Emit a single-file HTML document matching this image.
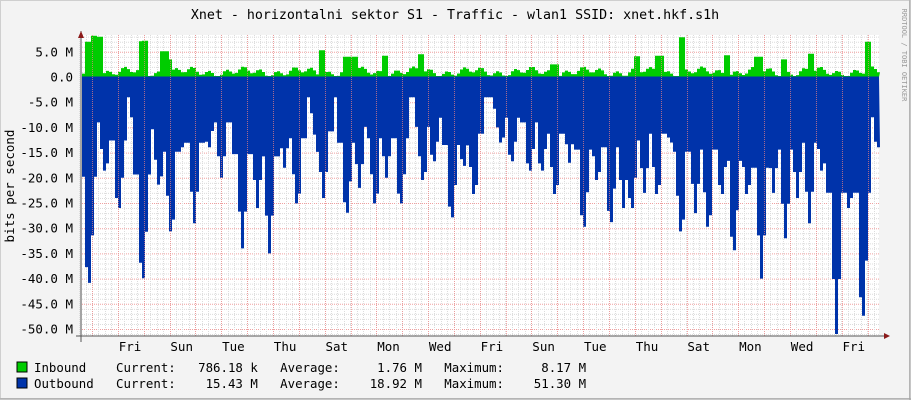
<!DOCTYPE html>
<html><head><meta charset="utf-8"><style>
html,body{margin:0;padding:0;background:#f3f3f3;}
svg{display:block;font-family:"DejaVu Sans Mono","Liberation Mono",monospace;}
</style></head><body>
<svg id="g" width="911" height="400" xmlns="http://www.w3.org/2000/svg">
<rect x="0" y="0" width="911" height="400" fill="#f3f3f3"/>
<rect x="0.5" y="0.5" width="909" height="398" fill="none" stroke="#cfcfcf"/>
<line x1="0" y1="399" x2="911" y2="399" stroke="#9a9a9a"/>
<line x1="910" y1="0" x2="910" y2="400" stroke="#9a9a9a"/>
<rect x="82" y="35" width="797" height="301" fill="#ffffff"/>
<g id="grid"></g>
<g id="data"></g>
<g id="grid2"></g>
<text x="455" y="19" font-size="13.3" text-anchor="middle" fill="#000">Xnet - horizontalni sektor S1 - Traffic - wlan1 SSID: xnet.hkf.s1h</text>
<text transform="translate(902,55) rotate(90)" font-size="7" fill="#999" text-anchor="middle">RRDTOOL / TOBI OETIKER</text>
<text transform="translate(14,186) rotate(-90)" font-size="12.5" fill="#000" text-anchor="middle">bits per second</text>
<g id="ylab" font-size="12.5" text-anchor="end" fill="#000"></g>
<g id="xlab" font-size="12.5" text-anchor="middle" fill="#000"></g>
<line x1="81" y1="31" x2="81" y2="342" stroke="#555"/>
<line x1="76" y1="336" x2="884" y2="336" stroke="#555"/>
<polygon points="78,38 84,38 81,31" fill="#8b1a1a"/>
<polygon points="884,333 884,339 890,336" fill="#8b1a1a"/>
<rect x="17" y="362" width="10" height="10" fill="#00cc00" stroke="#000"/>
<rect x="17" y="378" width="10" height="10" fill="#0033aa" stroke="#000"/>
<text x="34" y="372" font-size="12.4" xml:space="preserve">Inbound    Current:   786.18 k   Average:     1.76 M   Maximum:     8.17 M</text>
<text x="34" y="388" font-size="12.4" xml:space="preserve">Outbound   Current:    15.43 M   Average:    18.92 M   Maximum:    51.30 M</text>
</svg>
<script>
var ns="http://www.w3.org/2000/svg";
function el(p,t,a){var e=document.createElementNS(ns,t);for(var k in a)e.setAttribute(k,a[k]);p.appendChild(e);return e;}
var G=document.getElementById('grid'),G2=document.getElementById('grid2'),D=document.getElementById('data');
var X0=82,X1=879,Y0=77,S=5.04;
function y(v){return Y0-v*S;}
for(var v=-51;v<=8;v++){var yy=y(v)+0.5;if(yy<35||yy>336)continue;
 el(G,'line',{x1:X0,x2:X1,y1:yy,y2:yy,stroke:(v%5==0)?'#f0a0a0':'#dcdcdc','stroke-dasharray':'1,1'});}
for(var x=79.1;x<X1;x+=6.46){var xx=Math.round(x)+0.5;el(G,'line',{x1:xx,x2:xx,y1:35,y2:336,stroke:'#dcdcdc','stroke-dasharray':'1,1'});}
for(var x=92;x<X1;x+=25.85){var xx=Math.round(x)+0.5;el(G2,'line',{x1:xx,x2:xx,y1:35,y2:336,stroke:'#f08080','stroke-dasharray':'1,1','stroke-opacity':'0.7'});}
var peaks=[[87,-44],[104,-20],[117,-28],[141,-43],[158,-23],[170,-33],[182,-15],[193,-29],[207,-15],[220,-20],[241,-34],[256,-26],[268,-35],[283,-18],[296,-27],[317,-16],[322,-24],[345,-29],[358,-22],[374,-27],[385,-20],[399,-27],[422,-22],[432,-18],[450,-30],[462,-19],[473,-25],[500,-14],[510,-18],[528,-20],[540,-20],[554,-25],[568,-17],[582,-32],[596,-22],[609,-31],[622,-26],[630,-28],[643,-23],[656,-25],[669,-14],[680,-33],[694,-27],[707,-32],[720,-25],[732,-37],[746,-25],[760,-40],[772,-23],[784,-32],[796,-24],[808,-29],[821,-20],[835,-51],[848,-28],[861,-51],[872,-8],[876,-15]];
var d="M"+X0+","+Y0;
for(var x=X0;x<X1;x+=3){
 var v=-4;
 for(var i=0;i<peaks.length;i++){var dx=Math.abs(x-peaks[i][0]);if(dx<5){var w=peaks[i][1]*(1-dx/14);if(w<v)v=w;}else if(dx<10){var w=peaks[i][1]*0.45;if(w<v)v=w;}}
 if(((x*7)%13)<3)v=Math.min(v,-8);
 d+=" L"+x+","+y(v).toFixed(1)+" L"+(x+3)+","+y(v).toFixed(1);
}
d+=" L"+X1+","+Y0+"Z";
el(D,'path',{d:d,fill:'#0033aa'});
var spikes=[[88,7],[93,8.2],[97,8],[140,7.1],[144,7.2],[163,5.1],[167,3.5],[320,5.3],[345,4],[352,4],[383,4.2],[420,4.5],[553,2.5],[635,4.1],[658,4.2],[680,7.9],[726,4.3],[757,4],[783,3.5],[810,4.6],[866,7]];
var d2="M"+X0+","+Y0;
for(var x=X0;x<X1;x+=3){
 var v=1+0.6*Math.sin(x*0.37)+0.5*Math.sin(x*0.11);
 for(var i=0;i<spikes.length;i++){if(Math.abs(x-spikes[i][0])<4)v=Math.max(v,spikes[i][1]);}
 if(v<0.2)v=0.2;
 d2+=" L"+x+","+y(v).toFixed(1)+" L"+(x+3)+","+y(v).toFixed(1);
}
d2+=" L"+X1+","+Y0+"Z";
el(D,'path',{d:d2,fill:'#00cc00'});
el(D,'line',{x1:X0,x2:X1,y1:Y0,y2:Y0,stroke:'#0033aa'});
var YL=document.getElementById('ylab');
for(var v=5;v>=-50;v-=5){var t=el(YL,'text',{x:73,y:(y(v)+4.5).toFixed(1)});t.textContent=(v==0?'0.0':v.toFixed(1)+' M');}
var XL=document.getElementById('xlab');
var days=['Fri','Sun','Tue','Thu','Sat','Mon','Wed','Fri','Sun','Tue','Thu','Sat','Mon','Wed','Fri'];
for(var i=0;i<days.length;i++){var t=el(XL,'text',{x:(130+i*51.7).toFixed(1),y:351});t.textContent=days[i];}
</script>
</body></html>
